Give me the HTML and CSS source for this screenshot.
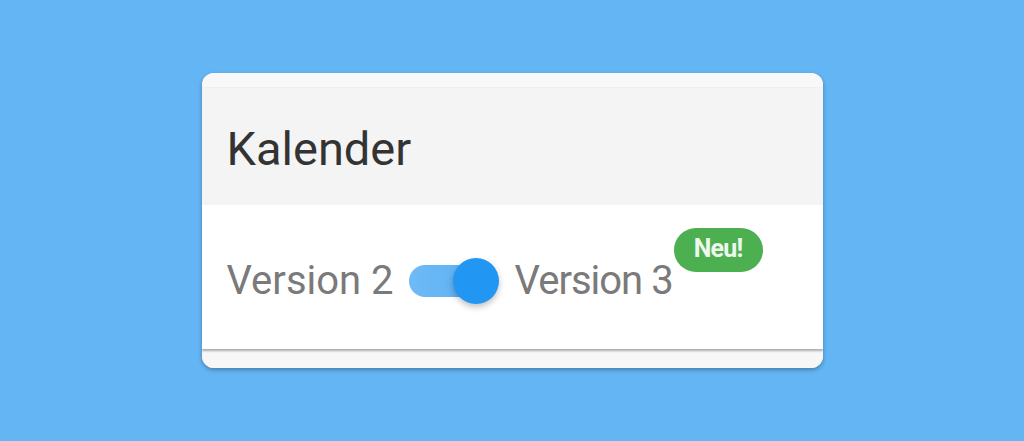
FILE: index.html
```html
<!DOCTYPE html>
<html lang="de">
<head>
<meta charset="utf-8">
<title>Kalender</title>
<link rel="stylesheet" href="styles.css">
</head>
<body>
<div class="card">
  <div class="card-top"></div>
  <div class="card-header">Kalender</div>
  <div class="card-body">
    <span class="label">Version 2</span>
    <span class="switch">
      <span class="track"></span>
      <span class="thumb"></span>
    </span>
    <span class="label label-new">Version 3<span class="badge">Neu!</span></span>
  </div>
  <div class="card-bottom"></div>
</div>
</body>
</html>
```

FILE: styles.css
```css
html, body {
  margin: 0;
  padding: 0;
}
body {
  width: 1024px;
  height: 441px;
  background: #64b5f4;
  display: flex;
  align-items: center;
  justify-content: center;
  font-family: Roboto, "Liberation Sans", sans-serif;
}
.card {
  width: 621px;
  height: 295px;
  border-radius: 12px;
  background: #f7f7f7;
  box-shadow: 0 2px 4px rgba(0, 0, 0, 0.3);
  overflow: hidden;
  display: flex;
  flex-direction: column;
}
.card-top {
  height: 14px;
  background: #f8f8f8;
  border-bottom: 1px solid #efefef;
}
.card-header {
  height: 117px;
  box-sizing: border-box;
  background: #f4f4f4;
  padding: 4px 0 0 25px;
  display: flex;
  align-items: center;
  font-size: 47px;
  line-height: 56px;
  color: #333333;
}
.card-body {
  position: relative;
  z-index: 1;
  height: 144px;
  box-sizing: border-box;
  background: #ffffff;
  padding: 7px 0 0 25px;
  display: flex;
  align-items: center;
  box-shadow: 0 2px 2px rgba(0, 0, 0, 0.3);
}
.card-bottom {
  flex: 1;
  background: #f7f7f7;
}
.label {
  font-size: 40px;
  line-height: 46px;
  color: #7a7a7a;
}
.switch {
  position: relative;
  width: 90px;
  height: 46px;
  margin: 0 16px 0 15px;
  display: flex;
  align-items: center;
}
.track {
  width: 78px;
  height: 32px;
  border-radius: 16px;
  background: linear-gradient(90deg, #6fbaf6, #5aaff4);
}
.thumb {
  position: absolute;
  left: 44px;
  top: 0;
  width: 46px;
  height: 46px;
  border-radius: 50%;
  background: #2196f3;
  box-shadow: 0 3px 6px rgba(0, 0, 0, 0.25);
}
.label-new {
  position: relative;
  letter-spacing: -1px;
}
.badge {
  position: absolute;
  left: calc(100% + 1px);
  top: -30px;
  width: 89px;
  height: 44px;
  box-sizing: border-box;
  border-radius: 22px;
  background: #4caf50;
  color: #eef7ee;
  font-size: 25px;
  font-weight: 700;
  line-height: 44px;
  letter-spacing: -0.8px;
  padding-bottom: 2px;
  display: flex;
  align-items: center;
  justify-content: center;
}
```
